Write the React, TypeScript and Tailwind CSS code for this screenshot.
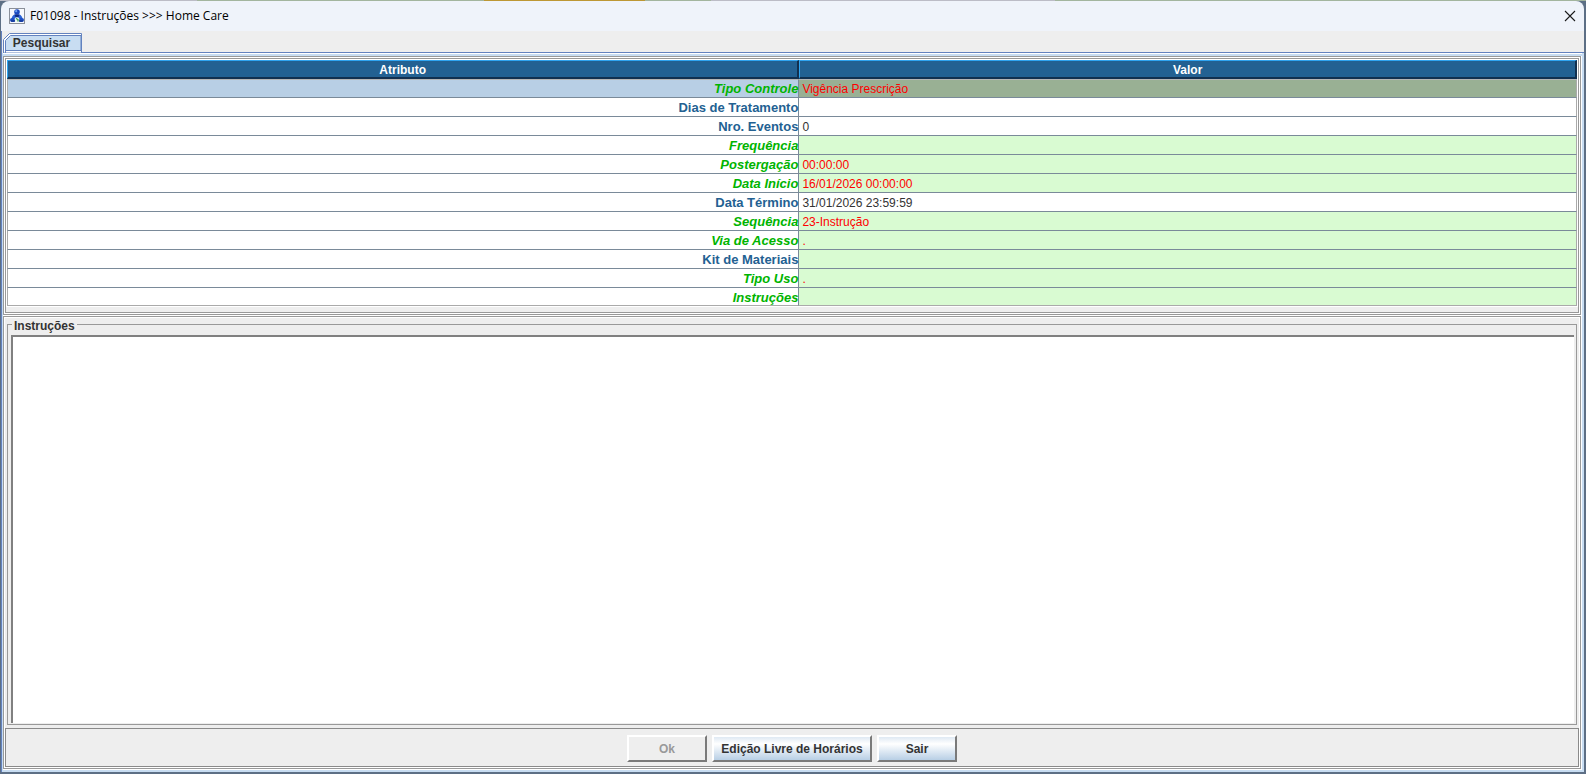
import { useState } from "react";

type Row = {
  label: string;
  value: string;
  required?: boolean;
  green?: boolean;
};

const rows: Row[] = [
  { label: "Tipo Controle", value: "Vigência Prescrição", required: true, green: true },
  { label: "Dias de Tratamento", value: "" },
  { label: "Nro. Eventos", value: "0" },
  { label: "Frequência", value: "", required: true, green: true },
  { label: "Postergação", value: "00:00:00", required: true, green: true },
  { label: "Data Início", value: "16/01/2026 00:00:00", required: true, green: true },
  { label: "Data Término", value: "31/01/2026 23:59:59" },
  { label: "Sequência", value: "23-Instrução", required: true, green: true },
  { label: "Via de Acesso", value: ".", required: true, green: true },
  { label: "Kit de Materiais", value: "", green: true },
  { label: "Tipo Uso", value: ".", required: true, green: true },
  { label: "Instruções", value: "", required: true, green: true },
];

const AppIcon = () => (
  <svg viewBox="0 0 16 16" className="h-4 w-4" aria-hidden="true">
    <rect x="0.5" y="0.5" width="15" height="15" fill="#f7f9fd" stroke="#8a8f99" />
    <path d="M5.5 6.5h5c1.5 0.5 2.500 2 3 4h-11c0.500-2 1.500-3.500 3-4Z" fill="#2a63d6" />
    <circle cx="8" cy="4" r="2.8" fill="#1a49c0" />
    <circle cx="7.2" cy="3.200" r="1.100" fill="#6ea2f2" />
    <path d="M5.500 6.500h5l-1 2.500h-3Z" fill="#0f2c86" />
    <rect x="1" y="10" width="5.500" height="4" rx="2" fill="#1d4fc4" />
    <rect x="9.500" y="10" width="5.500" height="4" rx="2" fill="#1d4fc4" />
    <path d="M2 13h4M10 13h4" stroke="#0f2c86" />
    <circle cx="8" cy="11.500" r="2.300" fill="#eaf6ee" />
    <path d="M7 10.500l2 1v2" fill="none" stroke="#27924a" strokeWidth="1.200" />
  </svg>
);

const TitleBar = () => (
  <header className="flex h-[30px] items-center justify-between rounded-t-lg bg-[#eff3fa] px-2">
    <div className="flex items-center gap-[5px]">
      <AppIcon />
      <h1 className="font-['Open_Sans',sans-serif] text-[12px] leading-4 text-black">
        F01098 - Instruções &gt;&gt;&gt; Home Care
      </h1>
    </div>
    <button aria-label="Fechar" className="flex h-3 w-3 items-center justify-center">
      <svg viewBox="0 0 12 12" className="h-3 w-3">
        <path d="M1 1l10 10M11 1L1 11" stroke="#1a1a1a" strokeWidth="1.1" fill="none" />
      </svg>
    </button>
  </header>
);

const Tab = () => (
  <div role="tablist" className="flex h-[22px] items-end bg-[#eeeeee] pl-px">
    <button
      role="tab"
      aria-selected="true"
      className="relative h-5 w-[79px] pr-0.5 text-[12px] font-bold leading-5 text-[#333333]"
    >
      <svg viewBox="0 0 79 20" className="absolute inset-0 h-full w-full" aria-hidden="true">
        <path d="M0.5 20V6.5L6.5 0.5H78.5V20Z" fill="#ffffff" stroke="#6382bf" />
        <path d="M2.5 20V7.5L7.5 2.5H78V17.5H2.5" fill="#c8ddf2" stroke="#6382bf" />
      </svg>
      <span className="relative">Pesquisar</span>
    </button>
    <div className="h-px flex-1 bg-[#6382bf]" />
  </div>
);

const headCell =
  "h-[19px] border-b-2 border-r-2 border-l border-t border-b-[#12304f] border-r-[#12304f] border-l-[#2fa4f0] border-t-[#2fa4f0] bg-[#236192] p-0 pt-0.5 text-center text-[12px] font-bold leading-[14px] text-white";

const rowEdge = (i: number) => {
  if (i === 0) return "border-t border-t-[#b5b5b5] border-b-[#7a8a99] pt-px leading-4";
  if (i === rows.length - 1) return "border-b-[#aaaaaa] pt-0.5 leading-[15px]";
  return "border-b-[#7a8a99] pt-0.5 leading-4";
};

const AttributeTable = () => {
  const [selected, setSelected] = useState<number>(0);

  return (
    <table className="w-full table-fixed border-separate border-spacing-0">
      <colgroup>
        <col className="w-[50.47%]" />
        <col />
      </colgroup>
      <thead>
        <tr>
          <th className={headCell}>Atributo</th>
          <th className={headCell}>Valor</th>
        </tr>
      </thead>
      <tbody>
        {rows.map((row, i) => (
          <tr key={row.label} onClick={() => setSelected(i)}>
            <th
              scope="row"
              className={`border-b border-l border-r border-l-[#aaaaaa] border-r-[#7a8a99] text-right text-[13px] font-bold ${rowEdge(i)} ${
                row.required ? "italic text-[#00b400]" : "text-[#236192]"
              } ${selected === i ? "bg-[#b8cfe5]" : "bg-white"}`}
            >
              {row.label}
            </th>
            <td
              className={`border-b border-r border-r-[#aaaaaa] pl-[3px] text-[12px] ${rowEdge(i)} ${
                row.required ? "text-[#ff0000]" : "text-[#333333]"
              } ${
                row.green ? (selected === i ? "bg-[#99b094]" : "bg-[#d9fbd2]") : "bg-white"
              }`}
            >
              {row.value}
            </td>
          </tr>
        ))}
      </tbody>
    </table>
  );
};

const buttonBase =
  "h-[27px] border-2 border-b-[#7a7a7a] border-l-white border-r-[#7a7a7a] border-t-white text-[12px] font-bold leading-4";
const buttonBlue = "bg-linear-to-b from-[#dfe9f3] via-white via-30% to-[#b8cfe5] text-[#333333]";

const App = () => {
  const [text, setText] = useState<string>("");

  return (
    <main className="flex min-h-screen flex-col bg-[#5d6f85] font-['Liberation_Sans',Arial,sans-serif]">
      <div className="flex h-px bg-[#a3b59e]">
        <div className="w-[12.4%] bg-[#bcbcc6]" />
        <div className="w-[18.1%]" />
        <div className="w-[10.2%] bg-[#bd9733]" />
        <div className="w-[4.1%]" />
        <div className="w-[21.7%] bg-[#bcbcc6]" />
      </div>
      <div className="mb-0.5 ml-px mr-0.5 flex flex-1 flex-col">
        <TitleBar />
        <div className="flex flex-1 flex-col border-l border-[#6382bf]">
          <Tab />
          <div className="flex flex-1 flex-col border-b-2 border-l border-r-2 border-[#c8ddf2]">
            <div className="h-px bg-white" />
            <div className="h-0.5 bg-[#c8ddf2]" />
            <div className="flex flex-1 flex-col gap-px bg-white pb-px pr-px">
              <section className="border border-[#999999] p-px">
                <div className="border border-[#999999] bg-[#eeeeee] pb-[5px]">
                  <div className="border border-white">
                    <AttributeTable />
                  </div>
                </div>
              </section>
              <section className="flex flex-1 flex-col border border-[#999999] p-px">
                <div className="flex flex-1 flex-col bg-[#eeeeee] px-0.5 pb-[3px] pt-1.5">
                  <div className="relative flex flex-1 flex-col border border-[#999999] px-0.5 pb-px pl-[3px] pt-[10px]">
                    <label
                      htmlFor="instrucoes"
                      className="absolute -top-[7px] left-1 bg-[#eeeeee] px-0.5 text-[12px] font-bold leading-4 text-[#333333]"
                    >
                      Instruções
                    </label>
                    <textarea
                      id="instrucoes"
                      value={text}
                      onChange={(e) => setText(e.target.value)}
                      className="w-full flex-1 resize-none border-l-2 border-t-2 border-[#808080] bg-white p-1 text-[12px] outline-none"
                    />
                  </div>
                </div>
                <footer className="flex h-[39px] items-center justify-center gap-[5px] border border-[#8a8a8a] bg-[#eeeeee] pt-0.5">
                  <button disabled className={`${buttonBase} w-20 bg-[#eeeeee] text-[#999999]`}>
                    Ok
                  </button>
                  <button className={`${buttonBase} w-40 ${buttonBlue}`}>
                    Edição Livre de Horários
                  </button>
                  <button className={`${buttonBase} w-20 ${buttonBlue}`}>Sair</button>
                </footer>
              </section>
            </div>
          </div>
        </div>
      </div>
    </main>
  );
};

export default App;
